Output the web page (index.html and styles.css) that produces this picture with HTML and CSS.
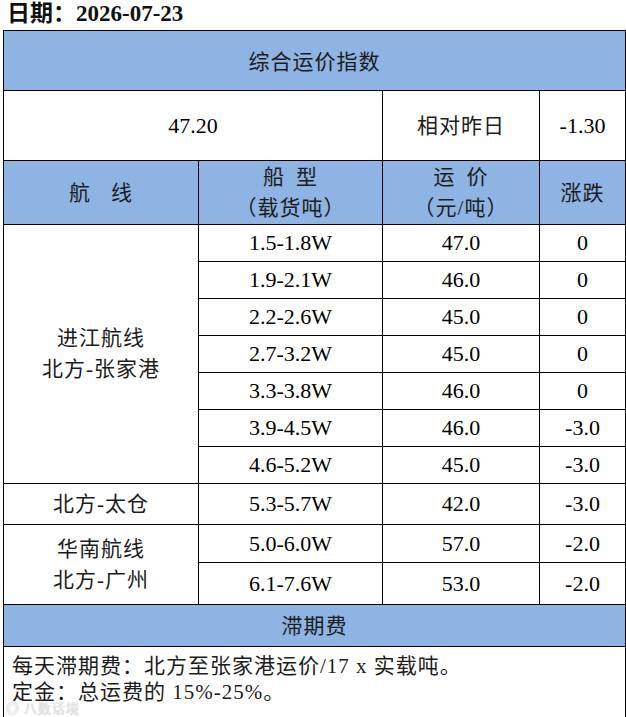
FILE: index.html
```html
<!DOCTYPE html>
<html lang="zh-CN">
<head>
<meta charset="utf-8">
<title>综合运价指数</title>
<link rel="stylesheet" href="styles.css">
</head>
<body>
<div class="page">
  <div class="date">日期：2026-07-23</div>
  <table class="freight">
    <colgroup>
      <col class="c1"><col class="c2"><col class="c3"><col class="c4">
    </colgroup>
    <tr class="r-title">
      <td colspan="4" class="blue cjk">综合运价指数</td>
    </tr>
    <tr class="r-index">
      <td colspan="2">47.20</td>
      <td class="cjk">相对昨日</td>
      <td>-1.30</td>
    </tr>
    <tr class="r-head">
      <td class="blue cjk"><span class="gap-l">航</span>线</td>
      <td class="blue cjk two"><span class="gap-s">船</span>型<br>（载货吨）</td>
      <td class="blue cjk two"><span class="gap-s">运</span>价<br>（元/吨）</td>
      <td class="blue cjk">涨跌</td>
    </tr>
    <tr class="r-data">
      <td rowspan="7" class="cjk two">进江航线<br>北方-张家港</td>
      <td>1.5-1.8W</td><td>47.0</td><td>0</td>
    </tr>
    <tr class="r-data"><td>1.9-2.1W</td><td>46.0</td><td>0</td></tr>
    <tr class="r-data"><td>2.2-2.6W</td><td>45.0</td><td>0</td></tr>
    <tr class="r-data"><td>2.7-3.2W</td><td>45.0</td><td>0</td></tr>
    <tr class="r-data"><td>3.3-3.8W</td><td>46.0</td><td>0</td></tr>
    <tr class="r-data"><td>3.9-4.5W</td><td>46.0</td><td>-3.0</td></tr>
    <tr class="r-data"><td>4.6-5.2W</td><td>45.0</td><td>-3.0</td></tr>
    <tr class="r-tc">
      <td class="cjk">北方-太仓</td>
      <td>5.3-5.7W</td><td>42.0</td><td>-3.0</td>
    </tr>
    <tr class="r-south">
      <td rowspan="2" class="cjk two">华南航线<br>北方-广州</td>
      <td>5.0-6.0W</td><td>57.0</td><td>-2.0</td>
    </tr>
    <tr class="r-south2"><td>6.1-7.6W</td><td>53.0</td><td>-2.0</td></tr>
    <tr class="r-demur">
      <td colspan="4" class="blue cjk">滞期费</td>
    </tr>
    <tr class="r-note">
      <td colspan="4" class="note cjk">每天滞期费：北方至张家港运价/17 x 实载吨。<br>定金：总运费的 15%-25%。</td>
    </tr>
  </table>
  <div class="watermark">◎ 八数话境</div>
</div>
</body>
</html>
```

FILE: styles.css
```css
html, body {
  margin: 0;
  padding: 0;
  background: #ffffff;
}

.page {
  position: relative;
  width: 626px;
  height: 717px;
  padding: 0 0 0 3px;
  box-sizing: border-box;
  font-family: "Liberation Serif", "Noto Sans CJK SC", serif;
  color: #000;
}

.date {
  height: 30px;
  line-height: 30px;
  padding-left: 4px;
  font-size: 23px;
  font-weight: bold;
  color: #111;
  position: relative;
  top: -1px;
}

.freight {
  width: 622px;
  table-layout: fixed;
  border-collapse: collapse;
  font-size: 22px;
}

.c1 { width: 195px; }
.c2 { width: 184px; }
.c3 { width: 157px; }
.c4 { width: 86px; }

.freight td {
  border: 1px solid #000;
  text-align: center;
  vertical-align: middle;
  padding: 0;
  line-height: 24px;
}

.freight td.two {
  line-height: 31px;
}

.blue {
  background: #8db4e2;
}

.freight td.cjk {
  font-size: 21px;
  letter-spacing: 1px;
  color: #1c1c1c;
}

.gap-l { margin-right: 20px; }
.gap-s { margin-right: 11px; }

.r-title td { height: 57px; padding-top: 2px; }
.r-index td { height: 69px; }
.r-head td { height: 63px; }
.r-data td { height: 36px; }
.r-tc td { height: 40px; }
.r-south td { height: 37px; }
.r-south2 td { height: 41px; }
.r-demur td { height: 41px; }
.r-note td { height: 65px; }

.freight td.note {
  text-align: left;
  vertical-align: top;
  padding: 6px 0 0 8px;
  line-height: 26px;
}

.watermark {
  position: absolute;
  left: 6px;
  bottom: 1px;
  font-family: "Noto Sans CJK SC", sans-serif;
  font-size: 13px;
  line-height: 16px;
  color: rgba(255, 255, 255, 0.75);
  text-shadow: 0 0 1px rgba(90, 90, 90, 0.6);
  letter-spacing: 1px;
}
```
